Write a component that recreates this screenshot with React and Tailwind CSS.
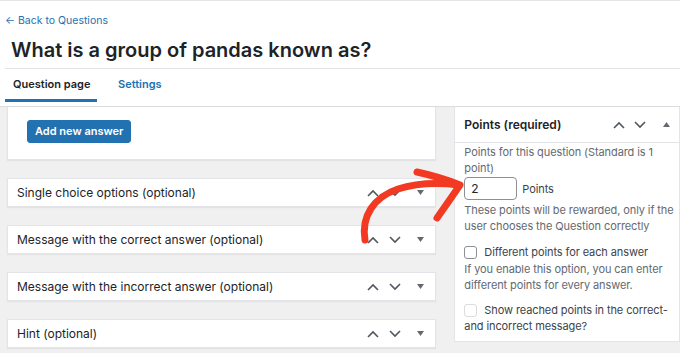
import React from "react";

const font = { fontFamily: "Inter, 'Noto Sans', sans-serif" };

const Up = () => (
  <svg width="12" height="8" viewBox="0 0 12 8" fill="none" stroke="#50575e" strokeWidth="1.6">
    <path d="M1 7 L6 2 L11 7" />
  </svg>
);
const Down = () => (
  <svg width="12" height="8" viewBox="0 0 12 8" fill="none" stroke="#50575e" strokeWidth="1.6">
    <path d="M1 1 L6 6 L11 1" />
  </svg>
);
const Caret = ({ up }) => (
  <svg width="7" height="5" viewBox="0 0 7 5" fill="#646970">
    {up ? <path d="M0 5 L3.5 0 L7 5 Z" /> : <path d="M0 0 L3.5 5 L7 0 Z" />}
  </svg>
);

const Box = ({ title }) => (
  <div className="mt-[18px] h-[29px] bg-white border border-[#e2e4e7] shadow-[0_1px_1px_rgba(0,0,0,0.05)] flex items-center pl-[9px] pr-[11px]">
    <span className="text-[12px] text-[#1d2327]">{title}</span>
    <div className="ml-auto flex items-center">
      <Up />
      <span className="ml-[10px]"><Down /></span>
      <span className="ml-[16px]"><Caret /></span>
    </div>
  </div>
);

export default function App() {
  return (
    <div className="w-[680px] h-[353px] bg-[#f0f0f1] overflow-hidden relative" style={font}>
      {/* header */}
      <div className="bg-white border-t border-[#e5e5e5] border-b border-b-[#dcdcde] h-[107px]">
        <div className="pl-[5px] pt-[13px]">
          <a className="text-[10.5px] text-[#2271b1] leading-[14px] block">← Back to Questions</a>
          <h1 className="pl-[6px] mt-[9px] text-[20px] font-semibold text-[#1d2327] leading-[26px]">
            What is a group of pandas known as?
          </h1>
        </div>
        <div className="mt-[5px] ml-[5px] border-t border-[#e2e4e7] flex h-[34px]">
          <div className="w-[92px] border-b-[3px] border-[#2271b1] flex items-center pl-[8px] text-[11px] font-semibold text-[#1d2327]">
            Question page
          </div>
          <div className="ml-[21px] flex items-center text-[11px] font-semibold text-[#2271b1] pb-[3px]">
            Settings
          </div>
        </div>
      </div>

      <div className="flex">
        {/* left column */}
        <div className="ml-[7px] w-[430px]">
          <div className="h-[53px] bg-white border border-t-0 border-[#e2e4e7] shadow-[0_1px_1px_rgba(0,0,0,0.05)] pl-[19px] pt-[10px]">
            <button className="h-[23px] px-[7px] bg-[#2271b1] rounded-[3px] text-white text-[11px] font-semibold border border-[#2271b1]">
              Add new answer
            </button>
          </div>
          <Box title="Single choice options (optional)" />
          <Box title="Message with the correct answer (optional)" />
          <Box title="Message with the incorrect answer (optional)" />
          <Box title="Hint (optional)" />
        </div>

        {/* right column */}
        <div className="ml-[18px] w-[226px]">
          <div className="bg-white border border-t-0 border-[#e2e4e7] h-[235px]">
            <div className="h-[36px] border-b border-[#e2e4e7] flex items-center pl-[9px] pr-[9px]">
              <span className="text-[12px] font-semibold text-[#1d2327]">Points (required)</span>
              <div className="ml-auto flex items-center">
                <Up />
                <span className="ml-[9px]"><Down /></span>
                <span className="ml-[17px]"><Caret up /></span>
              </div>
            </div>
            <div className="pl-[9px] pr-[2px] pt-[1px] text-[11px] leading-[16px] tracking-[-0.1px] text-[#646970]">
              <p>Points for this question (Standard is 1 point)</p>
              <div className="flex items-center mt-[1px]">
                <div className="w-[53px] h-[23px] border border-[#8c8f94] rounded-[4px] flex items-center pl-[6px] text-[12px] text-[#1d2327]">
                  2
                </div>
                <span className="ml-[5px] text-[#3c434a]">Points</span>
              </div>
              <p className="mt-[2px]">These points will be rewarded, only if the user chooses the Question correctly</p>
              <label className="flex items-center mt-[10px] text-[#3c434a]">
                <span className="w-[13px] h-[13px] border border-[#8c8f94] rounded-[3px] bg-white"></span>
                <span className="ml-[7px]">Different points for each answer</span>
              </label>
              <p className="mt-[1px]">If you enable this option, you can enter different points for every answer.</p>
              <div className="flex mt-[9px] text-[#3c434a]">
                <span className="w-[13px] h-[13px] border border-[#dcdcde] rounded-[3px] bg-white mt-[2px] shrink-0"></span>
                <span className="ml-[7px] whitespace-nowrap">Show reached points in the correct-</span>
              </div>
              <p className="text-[#3c434a]">and incorrect message?</p>
            </div>
          </div>
        </div>
      </div>

      {/* annotation arrow */}
      <svg className="absolute left-0 top-0 pointer-events-none" width="680" height="353" viewBox="0 0 680 353">
        <g fill="none" stroke="#f23a22" strokeWidth="7" strokeLinecap="round" strokeLinejoin="round">
          <path d="M365 240 C361 216 374 197 398 189 C420 182 442 183 459 185" />
          <path d="M417 172 Q440 177 460 185 Q449 201 437 218" />
        </g>
      </svg>
    </div>
  );
}
